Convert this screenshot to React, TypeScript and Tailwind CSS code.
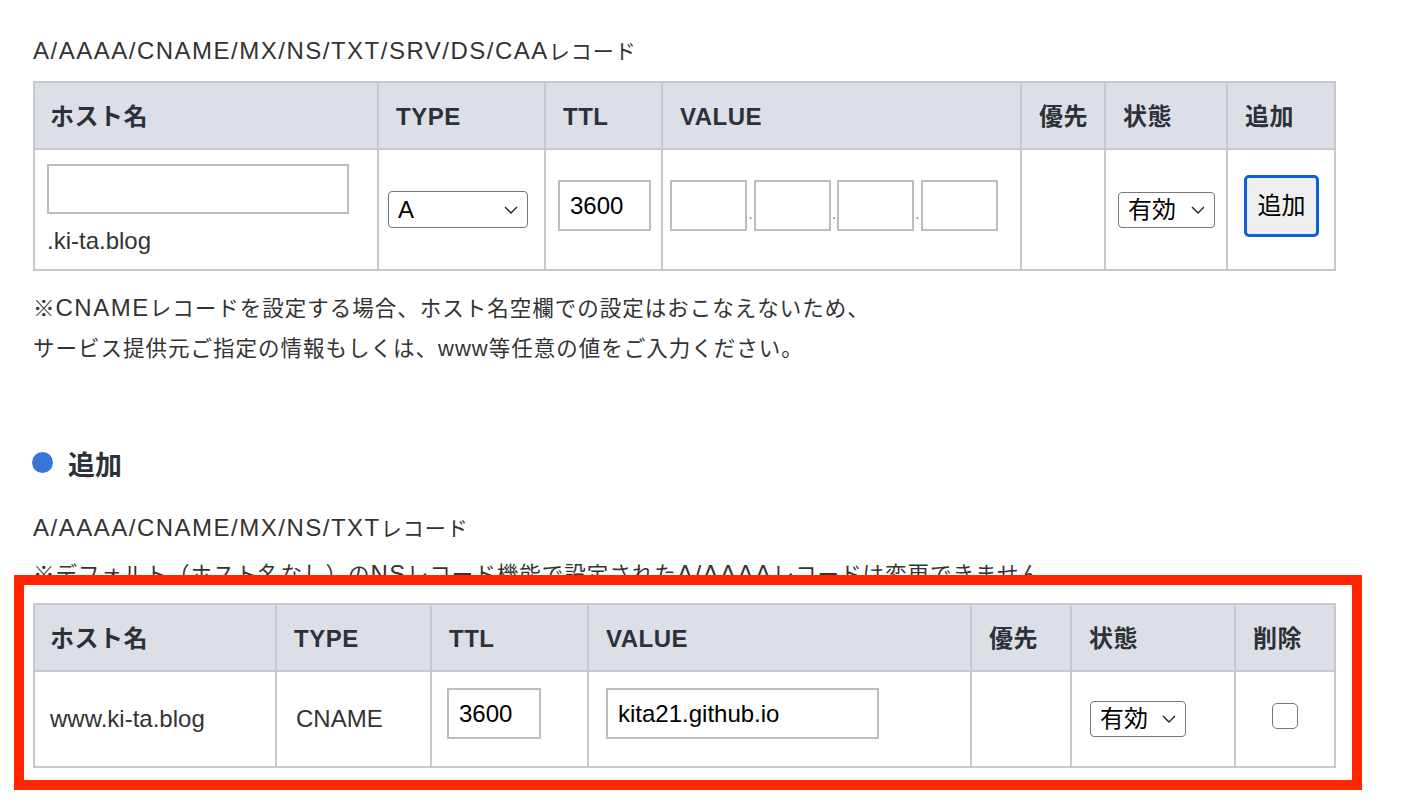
import React from "react";

const line = "border-r-2 border-b-2 border-[#c6c9ce]";
const head = `${line} h-[67px] bg-[#dce0e6] flex items-center pl-[17px] pt-[2px] text-[24px] tracking-[0.5px] font-bold text-[#2c3139]`;
const headFirst = `${line} h-[67px] bg-[#dce0e6] flex items-center pl-[15px] pt-[2px] text-[24px] tracking-[0.5px] font-bold text-[#2c3139]`;

function L({ children }: { children: React.ReactNode }) {
  return <span className="text-[24px] tracking-[1.5px]">{children}</span>;
}

function Chevron() {
  return (
    <svg
      width="14"
      height="8"
      viewBox="0 0 14 8"
      className="absolute right-[10px] top-1/2 -translate-y-1/2 pointer-events-none"
    >
      <path d="M1 1l6 6 6-6" fill="none" stroke="#222" strokeWidth="1.4" />
    </svg>
  );
}

interface SelectProps {
  value: string;
  options: string[];
  className: string;
}

function Select({ value, options, className }: SelectProps) {
  return (
    <div className={`relative ${className}`}>
      <select
        defaultValue={value}
        className="appearance-none w-full h-full bg-white border-[1.5px] border-[#767676] rounded-[4px] pl-[9px] text-[24px] leading-none text-black outline-none"
      >
        {options.map((o) => (
          <option key={o}>{o}</option>
        ))}
      </select>
      <Chevron />
    </div>
  );
}

function Box({ className, value = "" }: { className: string; value?: string }) {
  return (
    <input
      defaultValue={value}
      className={`h-[51px] border-2 border-[#bdbdbd] bg-white px-[10px] text-[24px] text-black outline-none ${className}`}
    />
  );
}

function Dot({ w }: { w: string }) {
  return <span className={`${w} pb-[10px] text-[14px] text-[#666] text-center leading-none`}>.</span>;
}

export default function App() {
  return (
    <div className="min-h-screen bg-white text-[#333] font-['Liberation_Sans','Noto_Sans_CJK_JP',sans-serif]">
      <div className="pl-[33px] pt-[31px] pb-[20px]">
        <p className="text-[21px] tracking-[1px] leading-[39px]">
          <L>A/AAAA/CNAME/MX/NS/TXT/SRV/DS/CAA</L>レコード
        </p>

        {/* A/AAAA... 追加フォーム */}
        <div className="mt-[10px] w-[1303px] grid grid-cols-[344px_167px_117px_359px_84px_122px_108px] border-l-2 border-t-2 border-[#c6c9ce]">
          <div className={headFirst}>ホスト名</div>
          <div className={head}>TYPE</div>
          <div className={head}>TTL</div>
          <div className={head}>VALUE</div>
          <div className={head}>優先</div>
          <div className={head}>状態</div>
          <div className={head}>追加</div>

          <div className={`${line} h-[121px] flex flex-col pl-[12px] pt-[14px]`}>
            <input className="w-[302px] h-[50px] border-2 border-[#bdbdbd] outline-none" />
            <span className="mt-[12px] text-[24px] leading-[30px]">.ki-ta.blog</span>
          </div>
          <div className={`${line} flex items-center pl-[9px]`}>
            <Select value="A" options={["A", "AAAA", "CNAME", "MX", "NS", "TXT", "SRV", "DS", "CAA"]} className="w-[140px] h-[37px]" />
          </div>
          <div className={`${line} pl-[12px] pt-[30px]`}>
            <Box value="3600" className="w-[93px]" />
          </div>
          <div className={`${line} pl-[7px] pt-[30px]`}>
            <div className="flex items-end h-[51px]">
              <Box className="w-[77px]" />
              <Dot w="w-[7px]" />
              <Box className="w-[77px]" />
              <Dot w="w-[6px]" />
              <Box className="w-[77px]" />
              <Dot w="w-[7px]" />
              <Box className="w-[77px]" />
            </div>
          </div>
          <div className={line}></div>
          <div className={`${line} flex items-center pl-[12px]`}>
            <Select value="有効" options={["有効", "無効"]} className="w-[97px] h-[36px]" />
          </div>
          <div className={`${line} pl-[16px] pt-[25px]`}>
            <button className="w-[75px] h-[62px] rounded-[5px] border-[3px] border-[#0b62d0] bg-[#efefef] text-[24px] text-black">
              追加
            </button>
          </div>
        </div>

        <div className="mt-[17px] text-[21.5px] tracking-[1px] leading-[39px]">
          <p>
            ※<L>CNAME</L>レコードを設定する場合、ホスト名空欄での設定はおこなえないため、
          </p>
          <p>
            サービス提供元ご指定の情報もしくは、<span className="text-[22px]">www</span>等任意の値をご入力ください。
          </p>
        </div>

        <h2 className="mt-[77px] flex items-center gap-[15px] h-[40px]">
          <span className="w-[21px] h-[21px] rounded-full bg-[#3a74d8] -mt-[8px] -ml-[1px]"></span>
          <span className="text-[27px] font-bold text-[#2c3139]">追加</span>
        </h2>

        <p className="mt-[22px] text-[21px] tracking-[1px] leading-[39px]">
          <L>A/AAAA/CNAME/MX/NS/TXT</L>レコード
        </p>
        <p className="mt-[6px] text-[21.5px] tracking-[1px] leading-[39px]">
          ※デフォルト（ホスト名なし）の<L>NS</L>レコード機能で設定された<L>A/AAAA</L>レコードは変更できません。
        </p>

        {/* 登録済みレコード（赤枠） */}
        <div className="relative -mt-[20px] -ml-[19px] w-fit border-[10px] border-[#ff2600] bg-white pl-[9px] pr-[16px] pt-[18px] pb-[12px]">
          <div className="w-[1303px] grid grid-cols-[242px_155px_157px_383px_100px_164px_100px] border-l-2 border-t-2 border-[#c6c9ce]">
            <div className={headFirst}>ホスト名</div>
            <div className={head}>TYPE</div>
            <div className={head}>TTL</div>
            <div className={head}>VALUE</div>
            <div className={head}>優先</div>
            <div className={head}>状態</div>
            <div className={head}>削除</div>

            <div className={`${line} h-[96px] flex items-center pl-[15px] text-[24px]`}>www.ki-ta.blog</div>
            <div className={`${line} flex items-center pl-[19px] text-[24px]`}>CNAME</div>
            <div className={`${line} pl-[15px] pt-[16px]`}>
              <Box value="3600" className="w-[94px]" />
            </div>
            <div className={`${line} pl-[17px] pt-[16px]`}>
              <Box value="kita21.github.io" className="w-[273px]" />
            </div>
            <div className={line}></div>
            <div className={`${line} flex items-center pl-[18px]`}>
              <Select value="有効" options={["有効", "無効"]} className="w-[96px] h-[36px]" />
            </div>
            <div className={`${line} flex items-center justify-center`}>
              <input
                type="checkbox"
                className="appearance-none w-[26px] h-[26px] rounded-[5px] border-[1.5px] border-[#767676] bg-white -mt-[6px]"
              />
            </div>
          </div>
        </div>
      </div>
    </div>
  );
}
